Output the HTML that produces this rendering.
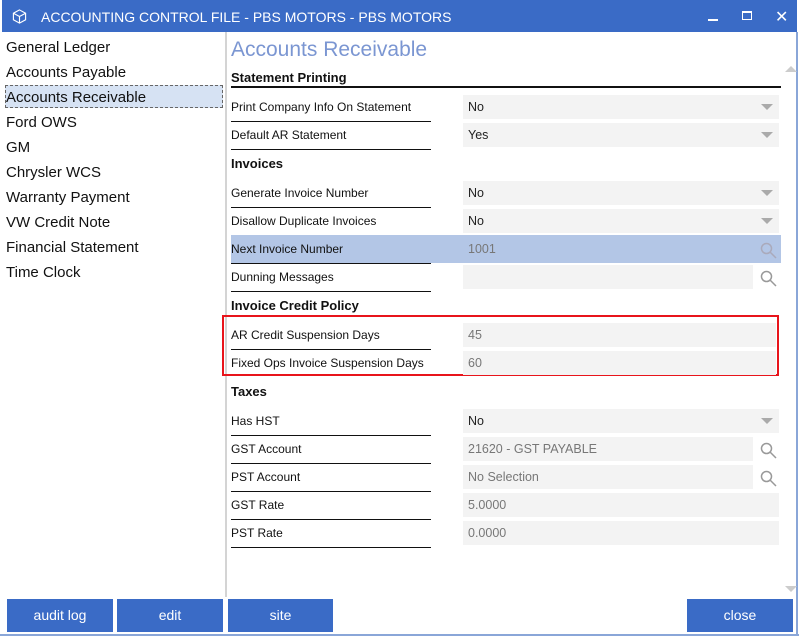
<!DOCTYPE html><html><head><style>
*{margin:0;padding:0;box-sizing:border-box}
body{width:799px;height:636px;background:#fff;font-family:"Liberation Sans",sans-serif;position:relative;overflow:hidden}
.a{position:absolute}
.title{left:2px;top:0;width:795px;height:32px;background:#3a6bc6;color:#fff;font-size:14px}
.nav{left:6px;font-size:15px;color:#111}
.lbl{left:231px;width:200px;height:28px;font-size:12px;color:#111;border-bottom:1.5px solid #111;padding-top:6px}
.val{left:463px;height:24px;background:#f3f3f3;font-size:12.5px;color:#222;padding:5px 0 0 5px}
.g{color:#777}
.hd{left:231px;font-size:13px;font-weight:bold;color:#111}
.dd{position:absolute;right:6px;top:9px;width:0;height:0;border-left:6px solid transparent;border-right:6px solid transparent;border-top:6px solid #aaa}
.btn{top:599px;height:33px;background:#3a6bc6;color:#fff;font-size:14px;text-align:center;line-height:33px}
</style></head><body>
<div class="a title"><svg class="a" style="left:10px;top:9px" width="15" height="15" viewBox="0 0 16 16" fill="none" stroke="#fff" stroke-width="1.2"><path d="M8 1L14.5 4.5V11.5L8 15L1.5 11.5V4.5Z M1.5 4.5L8 8L14.5 4.5 M8 8V15"/></svg>
<span class="a" style="left:39px;top:9px">ACCOUNTING CONTROL FILE - PBS MOTORS - PBS MOTORS</span>
<div class="a" style="left:706px;top:19px;width:10px;height:2px;background:#fff"></div>
<div class="a" style="left:740px;top:11px;width:10px;height:9px;border:1.5px solid #fff;border-top-width:2.5px"></div>
<span class="a" style="left:773px;top:7px;font-size:16px">✕</span></div>
<div class="a" style="left:796px;top:32px;width:2px;height:604px;background:#8aa6d8"></div>
<div class="a" style="left:0;top:634px;width:799px;height:2px;background:#8aa6d8"></div>
<div class="a" style="left:225px;top:32px;width:2px;height:565px;background:#d4d4d4"></div>
<div class="a" style="left:5px;top:85px;width:218px;height:23px;background:#d6e2f3;border:1px dashed #666"></div>
<div class="a nav" style="top:39px">General Ledger</div>
<div class="a nav" style="top:64px">Accounts Payable</div>
<div class="a nav" style="top:89px">Accounts Receivable</div>
<div class="a nav" style="top:114px">Ford OWS</div>
<div class="a nav" style="top:139px">GM</div>
<div class="a nav" style="top:164px">Chrysler WCS</div>
<div class="a nav" style="top:189px">Warranty Payment</div>
<div class="a nav" style="top:214px">VW Credit Note</div>
<div class="a nav" style="top:239px">Financial Statement</div>
<div class="a nav" style="top:264px">Time Clock</div>
<div class="a" style="left:231px;top:38px;font-size:21px;color:#7b96d2">Accounts Receivable</div>
<div class="a hd" style="top:70px">Statement Printing</div>
<div class="a" style="left:231px;top:86px;width:550px;height:2px;background:#111"></div>
<div class="a" style="left:785px;top:66px;border-left:6px solid transparent;border-right:6px solid transparent;border-bottom:6px solid #ccc"></div>
<div class="a" style="left:785px;top:586px;border-left:6px solid transparent;border-right:6px solid transparent;border-top:6px solid #ccc"></div>
<div class="a lbl" style="top:94px">Print Company Info On Statement</div><div class="a val" style="top:95px;width:316px">No<i class="dd"></i></div>
<div class="a lbl" style="top:122px">Default AR Statement</div><div class="a val" style="top:123px;width:316px">Yes<i class="dd"></i></div>
<div class="a hd" style="top:156px">Invoices</div>
<div class="a lbl" style="top:180px">Generate Invoice Number</div><div class="a val" style="top:181px;width:316px">No<i class="dd"></i></div>
<div class="a lbl" style="top:208px">Disallow Duplicate Invoices</div><div class="a val" style="top:209px;width:316px">No<i class="dd"></i></div>
<div class="a" style="left:231px;top:235px;width:550px;height:28px;background:#b3c6e6"></div>
<div class="a lbl" style="top:236px">Next Invoice Number</div><div class="a val g" style="top:237px;width:290px;background:#b3c6e6">1001</div>
<div class="a lbl" style="top:264px">Dunning Messages</div><div class="a val" style="top:265px;width:290px"></div>
<svg class="a" style="left:760px;top:242px" width="17" height="17" viewBox="0 0 17 17" fill="none" stroke="#aab" stroke-width="1.5"><circle cx="6.5" cy="6.5" r="5"/><path d="M10 10L16 16"/></svg>
<svg class="a" style="left:760px;top:270px" width="17" height="17" viewBox="0 0 17 17" fill="none" stroke="#999" stroke-width="1.5"><circle cx="6.5" cy="6.5" r="5"/><path d="M10 10L16 16"/></svg>
<div class="a hd" style="top:298px">Invoice Credit Policy</div>
<div class="a" style="left:222px;top:315px;width:557px;height:61px;border:2px solid #e8141b"></div>
<div class="a lbl" style="top:322px">AR Credit Suspension Days</div><div class="a val g" style="top:323px;width:313px">45</div>
<div class="a lbl" style="top:350px;border-bottom:none">Fixed Ops Invoice Suspension Days</div><div class="a val g" style="top:351px;width:313px">60</div>
<div class="a hd" style="top:384px">Taxes</div>
<div class="a lbl" style="top:408px">Has HST</div><div class="a val" style="top:409px;width:316px">No<i class="dd"></i></div>
<div class="a lbl" style="top:436px">GST Account</div><div class="a val g" style="top:437px;width:290px">21620 - GST PAYABLE</div>
<div class="a lbl" style="top:464px">PST Account</div><div class="a val g" style="top:465px;width:290px">No Selection</div>
<svg class="a" style="left:760px;top:442px" width="17" height="17" viewBox="0 0 17 17" fill="none" stroke="#999" stroke-width="1.5"><circle cx="6.5" cy="6.5" r="5"/><path d="M10 10L16 16"/></svg>
<svg class="a" style="left:760px;top:470px" width="17" height="17" viewBox="0 0 17 17" fill="none" stroke="#999" stroke-width="1.5"><circle cx="6.5" cy="6.5" r="5"/><path d="M10 10L16 16"/></svg>
<div class="a lbl" style="top:492px">GST Rate</div><div class="a val g" style="top:493px;width:316px">5.0000</div>
<div class="a lbl" style="top:520px">PST Rate</div><div class="a val g" style="top:521px;width:316px">0.0000</div>
<div class="a btn" style="left:7px;width:106px">audit log</div>
<div class="a btn" style="left:117px;width:106px">edit</div>
<div class="a btn" style="left:228px;width:105px">site</div>
<div class="a btn" style="left:687px;width:106px">close</div>
</body></html>
